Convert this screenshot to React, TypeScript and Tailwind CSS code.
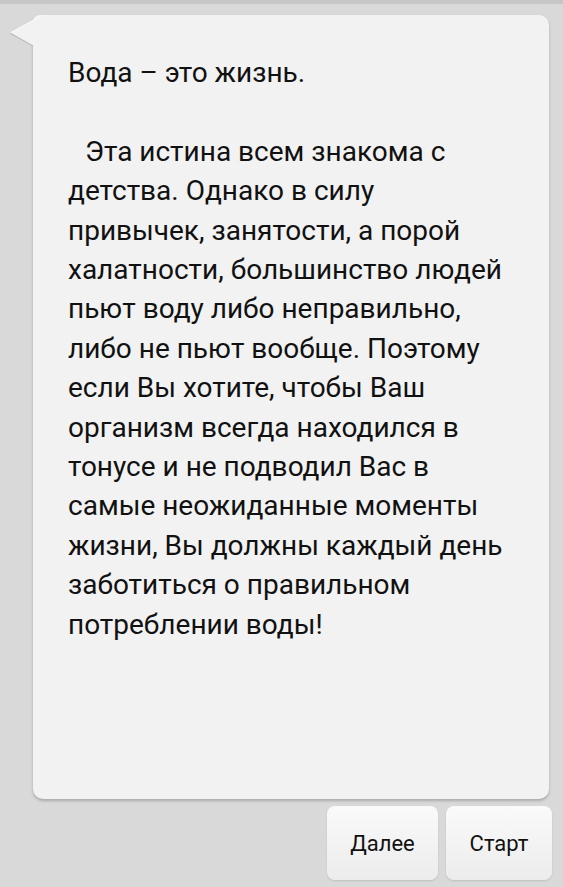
import React from "react";

const lines = [
  "детства. Однако в силу",
  "привычек, занятости, а порой",
  "халатности, большинство людей",
  "пьют воду либо неправильно,",
  "либо не пьют вообще. Поэтому",
  "если Вы хотите, чтобы Ваш",
  "организм всегда находился в",
  "тонусе и не подводил Вас в",
  "самые неожиданные моменты",
  "жизни, Вы должны каждый день",
  "заботиться о правильном",
  "потреблении воды!",
];

const Btn = ({ label, w }: { label: string; w: string }) => (
  <button
    type="button"
    className={`${w} h-[74px] rounded-[8px] bg-gradient-to-b from-[#fafafa] to-[#ececec] text-[22px] text-[#111] shadow-[0_1px_2px_rgba(0,0,0,0.12)]`}
  >
    {label}
  </button>
);

export default function App() {
  return (
    <div
      className="h-[887px] w-[563px] overflow-hidden border-t-4 border-[#c6c6c6] bg-[#d9d9d9] flex flex-col"
      style={{ fontFamily: "Roboto, 'Noto Sans', sans-serif" }}
    >
      <div className="relative ml-[33px] mr-[14px] mt-[11px] h-[784px] rounded-[10px] rounded-tl-[6px] bg-[#f2f2f2] shadow-[0_2px_3px_rgba(0,0,0,0.22)]">
        <svg
          className="absolute left-[-23px] top-0"
          width="34"
          height="33"
          viewBox="0 0 34 33"
        >
          <path d="M34 0 L33 0 L0 18 L23 31 L23 33 L34 33 Z" fill="#f2f2f2" />
          <path d="M33 0 L0 18" stroke="#fbfbfb" strokeWidth="1" fill="none" />
          <path d="M0 18 L23 31" stroke="#bdbdbd" strokeWidth="1.2" fill="none" />
        </svg>
        <div className="pl-[35px] pt-[38px] text-[28px] leading-[39.4px] text-[#111]">
          <div>Вода – это жизнь.</div>
          <div className="h-[39.4px]" />
          <div className="pl-[17px]">Эта истина всем знакома с</div>
          {lines.map((l) => (
            <div key={l}>{l}</div>
          ))}
        </div>
      </div>
      <div className="mt-[7px] mr-[11px] flex justify-end gap-[8px]">
        <Btn label="Далее" w="w-[111px]" />
        <Btn label="Старт" w="w-[106px]" />
      </div>
    </div>
  );
}
